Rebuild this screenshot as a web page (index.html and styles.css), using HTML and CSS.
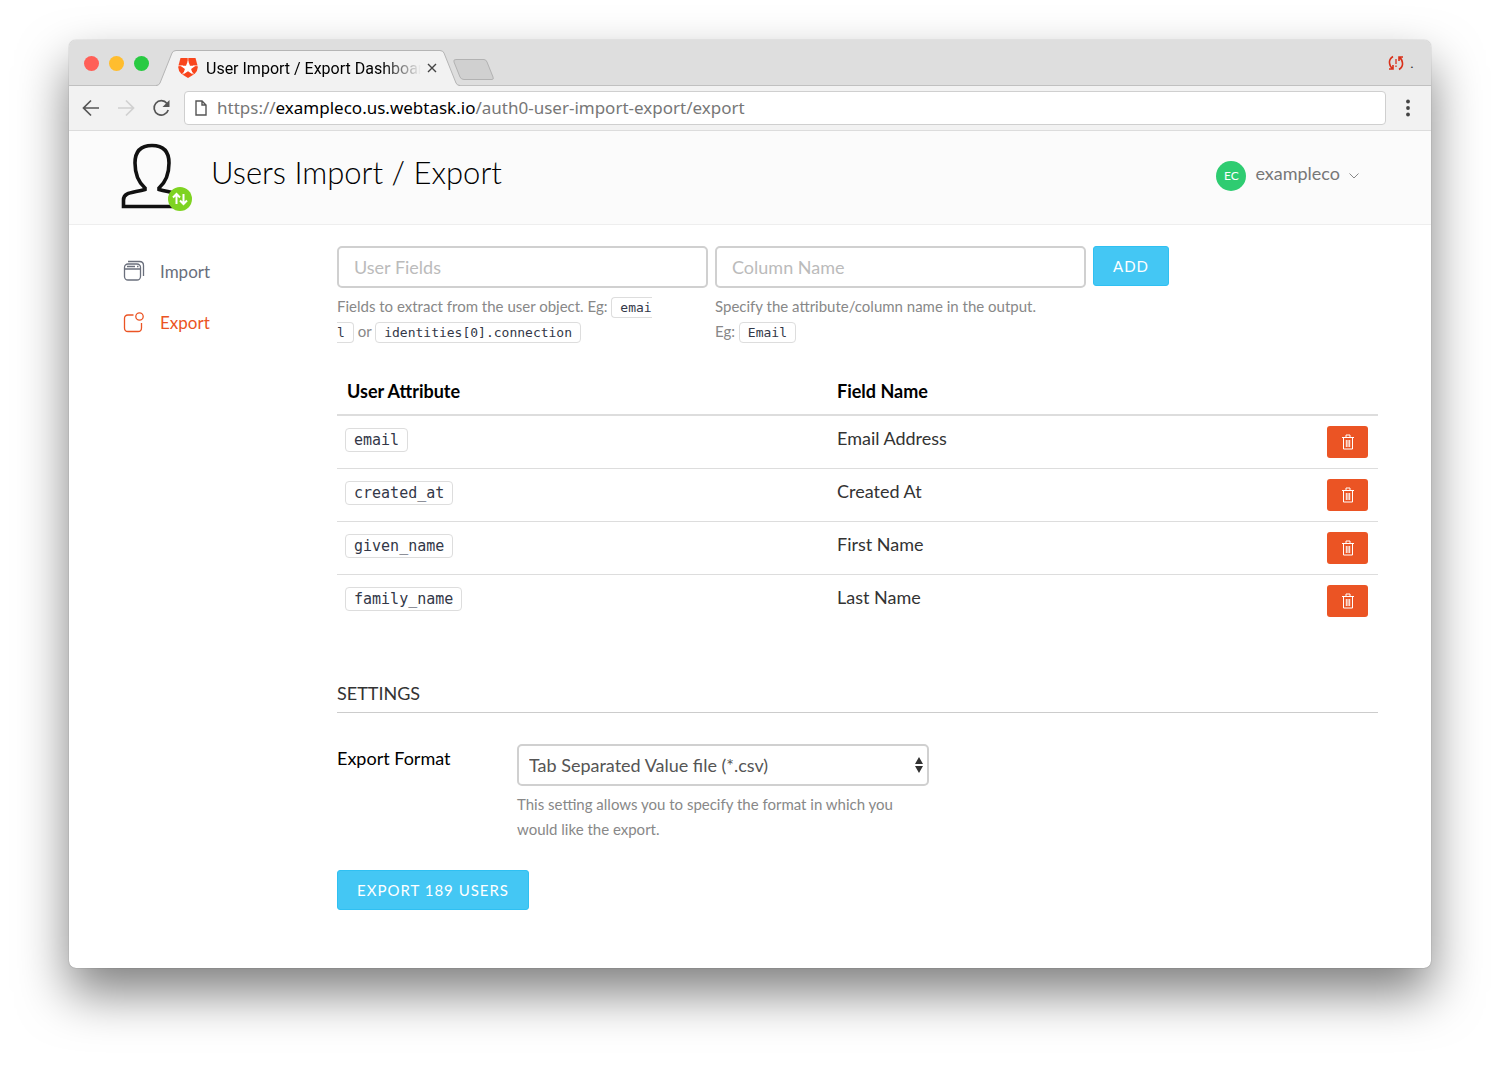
FILE: index.html
```html
<!DOCTYPE html>
<html lang="en">
<head>
<meta charset="utf-8">
<meta name="viewport" content="width=device-width, initial-scale=1">
<title>User Import / Export Dashboard</title>
<link rel="stylesheet" href="styles.css">
</head>
<body>
<svg hidden>
  <symbol id="trash" viewBox="0 0 14 18">
    <path d="M1 4.500h12M5 4V2h4v2M2.500 5v11h9V5M5.300 7v7M8.700 7v7M7 7v7" fill="none" stroke="currentColor" stroke-width="1"/>
  </symbol>
</svg>
<div class="window">
  <div class="tabstrip">
    <div class="lights"><span class="light red"></span><span class="light yellow"></span><span class="light green"></span></div>
    <div class="tab">
      <svg class="tab-shape" viewBox="0 0 300 37" aria-hidden="true"><path d="M-2 36Q1 35.500 2 33L14 3Q15 1 18 1H282Q285 1 286 3L298 33Q299 35.500 302 36V37H-2Z" fill="#f2f2f2"/><path d="M-2 35.500Q1 35.500 2 33L14 3Q15 .5 18 .5H282Q285 .5 286 3L298 33Q299 35.500 302 35.500" fill="none" stroke="#b5b5b5"/></svg>
      <svg class="favicon" viewBox="0 0 20 20" aria-hidden="true"><path d="M2.500 0h15l2 7.500q1 5-3 8.500L10 20 3.500 16q-4-3.500-3-8.500Z" fill="#f9451c"/><path d="M10 2.500l2 5.200h5.600l-4.500 3.400 1.800 5.500-4.900-3.400-4.900 3.400 1.800-5.500-4.500-3.400H8Z" fill="#fff"/><path d="M10 0v4M0 7.700h5M20 7.700h-5M3.500 17l3-3.500M16.500 17l-3-3.500" stroke="#fff" stroke-width=".6"/></svg>
      <span class="tab-title">User Import / Export Dashboard</span>
      <button class="close" aria-label="Close tab"><svg viewBox="0 0 10 10"><path d="M1 1l8 8M9 1L1 9" stroke="#444" stroke-width="1.400"/></svg></button>
    </div>
    <button class="newtab" aria-label="New tab"><svg viewBox="0 0 42 21"><path d="M3 .5H31Q33 .5 34 3L40 18Q41 20.500 39 20.500H11Q8 20.500 7 18L1 3Q0 .5 3 .5Z" fill="#d0d0d0" stroke="#b2b2b2"/></svg></button>
    <div class="profile"><svg viewBox="0 0 16 16" aria-hidden="true"><path d="M5 1.500Q1 4 1.500 8T4.500 13.500M1 14h4v-4M11 14.500Q15 12 14.500 8T11.500 2.500M15 2h-4v4" fill="none" stroke="#d9301a" stroke-width="1.600"/><path d="M8 4v5M8 10.500v1.500" stroke="#d9301a" stroke-width="1.300"/></svg><span>.</span></div>
  </div>
  <div class="toolbar">
    <button class="nav" aria-label="Back"><svg viewBox="0 0 18 18"><path d="M17 9H2M9 1.500L1.500 9 9 16.500" fill="none" stroke="#555" stroke-width="1.700"/></svg></button>
    <button class="nav" aria-label="Forward"><svg viewBox="0 0 18 18"><path d="M1 9h15M9 1.500L16.500 9 9 16.500" fill="none" stroke="#d0d0d0" stroke-width="1.700"/></svg></button>
    <button class="nav" aria-label="Reload"><svg viewBox="0 0 18 18"><path d="M15 4.500A7.200 7.200 0 1 0 16.200 11" fill="none" stroke="#555" stroke-width="1.700"/><path d="M17.500 1v7h-7Z" fill="#555"/></svg></button>
    <div class="address"><svg viewBox="0 0 12 16" aria-hidden="true"><path d="M1 1h6l4 4v10H1ZM7 1v4h4" fill="none" stroke="#555" stroke-width="1.400"/></svg><span class="url">https://<b>exampleco.us.webtask.io</b>/auth0-user-import-export/export</span></div>
    <button class="menu" aria-label="Menu"><svg viewBox="0 0 4 18"><circle cx="2" cy="2.500" r="1.900"/><circle cx="2" cy="9" r="1.900"/><circle cx="2" cy="15.500" r="1.900"/></svg></button>
  </div>
  <header class="header">
    <svg class="logo" viewBox="0 0 72 68" aria-hidden="true"><path d="M24 45C16 38 14 29 14 20 14 8 20 2.500 31 2.500S48 8 48 20C48 29 46 38 38 45V46.500C50 50 59 49 59 57V63.500H2.500V57C2.500 49 12 50 24 46.500Z" fill="none" stroke="#111" stroke-width="3.600"/><circle cx="59" cy="56" r="12" fill="#7ed321"/><path d="M55.500 61V51M52 54.500l3.500-3.500 3.500 3.500M62.500 51v10M59 57.500l3.500 3.500 3.500-3.500" fill="none" stroke="#fff" stroke-width="2"/></svg>
    <h1>Users Import / Export</h1>
    <button class="account"><span class="avatar">EC</span><span class="tenant">exampleco</span><svg viewBox="0 0 10 6" aria-hidden="true"><path d="M.5 .5L5 5 9.500 .5" fill="none" stroke="#888"/></svg></button>
  </header>
  <div class="body">
    <nav class="sidebar">
      <a href="#import"><svg viewBox="0 0 22 22" fill="none" stroke="currentColor" stroke-width="1.300"><rect x="1.500" y="4" width="16" height="16" rx="3.500"/><path d="M1.500 9h16M4 6.500h8M14 6.500h1.500M5 1.500h11.500Q20.500 1.500 20.500 5.500V16"/></svg>Import</a>
      <a href="#export" class="active"><svg viewBox="0 0 22 22" fill="none" stroke="currentColor" stroke-width="1.300"><path d="M10.500 4H5Q1.500 4 1.500 7.500V17Q1.500 20.500 5 20.500H15Q18.500 20.500 18.500 17V12"/><circle cx="16.500" cy="5.500" r="3.700"/></svg>Export</a>
    </nav>
    <main>
      <form class="add-form">
        <div><input type="text" id="field" placeholder="User Fields" aria-label="User Fields">
          <p class="help narrow">Fields to extract from the user object. Eg: <code>emai<wbr>l</code> or <code>identities[0].connection</code></p></div>
        <div><input type="text" id="column" placeholder="Column Name" aria-label="Column Name">
          <p class="help">Specify the attribute/column name in the output.<br>Eg: <code>Email</code></p></div>
        <div><button type="button" class="btn">ADD</button></div>
      </form>
      <table>
        <thead><tr><th>User Attribute</th><th>Field Name</th><th></th></tr></thead>
        <tbody>
          <tr><td><code>email</code></td><td>Email Address</td><td><button class="delete" aria-label="Delete email"><svg><use href="#trash"/></svg></button></td></tr>
          <tr><td><code>created_at</code></td><td>Created At</td><td><button class="delete" aria-label="Delete created_at"><svg><use href="#trash"/></svg></button></td></tr>
          <tr><td><code>given_name</code></td><td>First Name</td><td><button class="delete" aria-label="Delete given_name"><svg><use href="#trash"/></svg></button></td></tr>
          <tr><td><code>family_name</code></td><td>Last Name</td><td><button class="delete" aria-label="Delete family_name"><svg><use href="#trash"/></svg></button></td></tr>
        </tbody>
      </table>
      <h2>SETTINGS</h2>
      <div class="setting">
        <label for="format">Export Format</label>
        <div class="control">
          <div class="select"><select id="format"><option>Tab Separated Value file (*.csv)</option></select><svg viewBox="0 0 8 16" aria-hidden="true"><path d="M4 0l4 7H0ZM4 16l4-7H0Z" fill="#333"/></svg></div>
          <p class="help">This setting allows you to specify the format in which you would like the export.</p>
        </div>
      </div>
      <button class="btn">EXPORT 189 USERS</button>
    </main>
  </div>
</div>
</body>
</html>
```
FILE: styles.css
```css
* { box-sizing: border-box; }
body { margin: 0; padding: 40px 69px 99px; background: #fff; font-family: Lato, "Open Sans", sans-serif; font-size: 18px; color: #333; }
button { font: inherit; border: 0; padding: 0; background: none; cursor: pointer; }
svg { display: block; }
svg[hidden] { display: none; }
.window { min-height: calc(100vh - 139px); border-radius: 7px; background: #fff; box-shadow: 0 0 1px rgba(0,0,0,.5), 0 25px 50px rgba(0,0,0,.5); }

.tabstrip { display: flex; height: 46px; padding-right: 17px; background: #dedede; border-bottom: 1px solid #c0c0c0; border-radius: 7px 7px 0 0; font-family: Roboto, sans-serif; }
.lights { display: flex; gap: 10px; padding: 16px 9px 0 15px; }
.light { width: 15px; height: 15px; border-radius: 50%; }
.red { background: #ff5f57; }
.yellow { background: #ffbd2e; }
.green { background: #28ca42; }
.tab { position: relative; display: flex; align-items: center; width: 300px; height: 36px; margin-top: 10px; padding: 0 20px; }
.tab-shape { position: absolute; left: 0; top: 0; width: 300px; height: 37px; overflow: visible; }
.favicon { position: relative; width: 20px; height: 20px; margin-right: 8px; }
.tab-title { position: relative; width: 215px; overflow: hidden; white-space: nowrap; text-overflow: clip; font-size: 16px; color: #000; mask-image: linear-gradient(to right, #000 82%, transparent); }
.close { position: relative; margin-left: 6px; }
.close svg { width: 10px; height: 10px; }
.newtab { align-self: flex-start; margin: 19px 0 0 -5px; }
.newtab svg { width: 42px; height: 21px; }
.profile { display: flex; gap: 6px; align-items: center; margin-left: auto; font-size: 15px; }
.profile svg { width: 16px; height: 16px; }

.toolbar { display: flex; align-items: center; gap: 17px; height: 45px; padding: 0 21px 0 13px; background: #f2f2f2; border-bottom: 1px solid #dcdcdc; }
.nav svg { width: 18px; height: 18px; }
.address { flex: 1; display: flex; align-items: center; gap: 10px; height: 34px; margin: 0 3px 0 -3px; padding: 0 0 1px 10px; border: 1px solid #cfcfcf; border-radius: 4px; background: #fff; font: 17px "Noto Sans", sans-serif; color: #777; }
.address svg { width: 12px; height: 16px; }
.url b { font-weight: 400; color: #000; }
.menu svg { width: 4px; height: 18px; fill: #444; }

.header { display: flex; height: 94px; padding: 0 72px 0 52px; background: #fbfbfb; border-bottom: 1px solid #eee; }
.logo { width: 72px; height: 68px; margin-top: 12px; }
h1 { margin: 21px 0 0 18px; font-size: 31px; line-height: 40px; font-weight: 300; color: #000; }
.account { display: flex; align-items: center; align-self: flex-start; gap: 9px; height: 30px; margin: 30px 0 0 auto; font-size: 18px; color: #777; }
.avatar { width: 30px; height: 30px; border-radius: 50%; background: #2ecc71; color: #fff; font-size: 12px; line-height: 30px; text-align: center; }
.tenant { align-self: flex-start; line-height: 24px; }
.account svg { width: 10px; height: 6px; }

.body { display: grid; grid-template-columns: 214px 1fr; padding: 21px 53px 58px 54px; }
.sidebar { display: flex; flex-direction: column; gap: 21px; padding-top: 10px; }
.sidebar a { display: flex; align-items: center; gap: 15px; height: 30px; font-size: 17px; color: #6a6f7c; text-decoration: none; }
.sidebar a.active { color: #eb5424; }
.sidebar svg { width: 22px; height: 22px; }

.add-form { display: grid; grid-template-columns: 371fr 371fr 285fr; gap: 7px; }
input, select { display: block; width: 100%; height: 42px; border: 2px solid #d0d0d0; border-radius: 5px; background: #fff; font: 18px Lato, sans-serif; color: #555; }
input { padding: 0 15px; }
input::placeholder { color: #bbb; }
.help { margin: 6px 0 0; font-size: 15px; line-height: 25px; color: #888; }
.narrow { width: 326px; }
code { padding: 2px 8px; border: 1px solid #ddd; border-radius: 4px; background: #fff; font: 13px "DejaVu Sans Mono", monospace; color: #333848; }
.btn { height: 40px; padding: 0 19px; border: 1px solid #2fc0f2; border-radius: 3px; background: #44c7f4; color: #fff; font-size: 15px; letter-spacing: 1px; }

table { width: 100%; margin-top: 25px; border-collapse: collapse; table-layout: fixed; line-height: 24px; }
th { padding: 10px 10px 11px; border-bottom: 2px solid #ddd; text-align: left; font-weight: 700; color: #000; }
th:last-child { width: 61px; }
td { padding: 10px; border-bottom: 1px solid #ddd; vertical-align: top; font-weight: 400; }
tr:last-child td { border-bottom: 0; }
td code { margin-left: -2px; font-size: 15px; }
.delete { display: grid; place-items: center; width: 41px; height: 32px; border-radius: 3px; background: #eb5424; color: #fff; }
.delete svg { width: 14px; height: 18px; }

h2 { margin: 54px 0 31px; padding-bottom: 7px; border-bottom: 1px solid #ccc; font-size: 18px; line-height: 24px; font-weight: 400; }
.setting { display: grid; grid-template-columns: 180px 412px; margin-bottom: 28px; }
.setting label { line-height: 28px; color: #000; }
.select { position: relative; }
.select select { padding: 0 10px; appearance: none; }
.select svg { position: absolute; right: 6px; top: 13px; width: 8px; height: 16px; }
```
